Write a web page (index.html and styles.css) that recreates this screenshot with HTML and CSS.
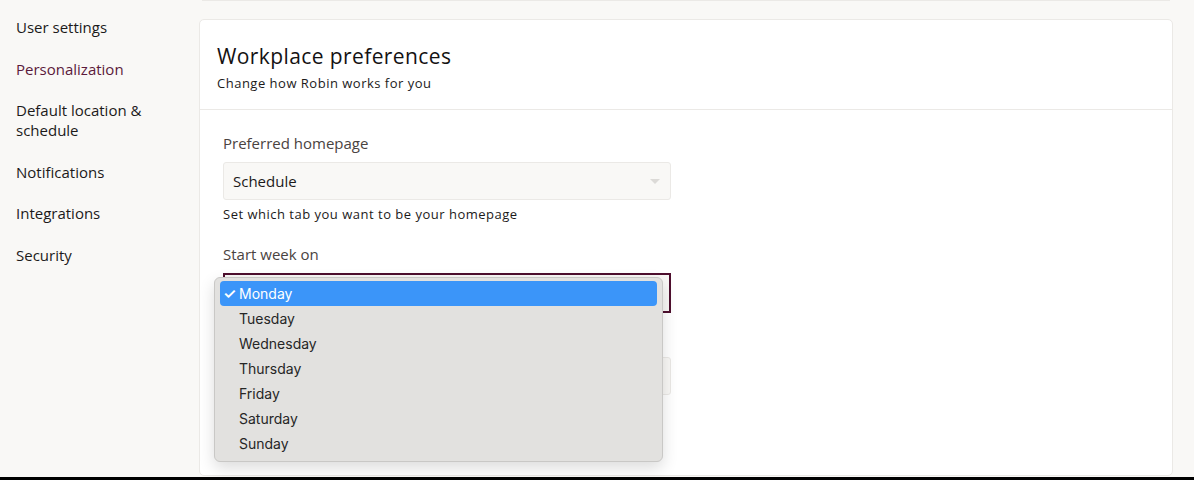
FILE: index.html
```html
<!DOCTYPE html>
<html lang="en">
<head>
    <meta charset="UTF-8">
    <meta name="viewport" content="width=device-width, initial-scale=1.0">
    <title>Personalization</title>
    <link rel="stylesheet" href="styles.css">
</head>
<body>
    <div class="page">
        <!-- Menu lateral -->
        <nav class="sidebar">
            <a class="nav-item">User settings</a>
            <a class="nav-item active">Personalization</a>
            <a class="nav-item">Default location &amp;<br>schedule</a>
            <a class="nav-item">Notifications</a>
            <a class="nav-item">Integrations</a>
            <a class="nav-item">Security</a>
        </nav>

        <main class="main">
            <div class="prev-card"></div>

            <section class="card">
                <header class="card-header">
                    <h1 class="card-title">Workplace preferences</h1>
                    <p class="card-subtitle">Change how Robin works for you</p>
                </header>

                <div class="card-body">
                    <div class="field">
                        <label class="field-label">Preferred homepage</label>
                        <div class="select">
                            <span>Schedule</span>
                            <span class="caret"></span>
                        </div>
                        <p class="field-help">Set which tab you want to be your homepage</p>
                    </div>

                    <div class="field">
                        <label class="field-label">Start week on</label>
                        <div class="select-wrap">
                            <div class="select focused"></div>

                            <!-- Menu nativo abierto -->
                            <ul class="menu">
                                <li class="menu-item selected"><span class="check">✓</span>Monday</li>
                                <li class="menu-item">Tuesday</li>
                                <li class="menu-item">Wednesday</li>
                                <li class="menu-item">Thursday</li>
                                <li class="menu-item">Friday</li>
                                <li class="menu-item">Saturday</li>
                                <li class="menu-item">Sunday</li>
                            </ul>
                        </div>
                    </div>

                    <div class="field field-hidden">
                        <div class="select"></div>
                    </div>
                </div>
            </section>
        </main>
    </div>
    <div class="bottom-bar"></div>
</body>
</html>
```

FILE: styles.css
```css
body {
    margin: 0;
    height: 480px;
    overflow: hidden;
    background: #f9f8f6;
    color: #1c1a1a;
    font-family: 'Open Sans', 'Lato', sans-serif;
    position: relative;
}

.page {
    display: flex;
}

/* Menu lateral */
.sidebar {
    width: 183px;
    flex-shrink: 0;
    padding: 17px 0 0 16px;
    display: flex;
    flex-direction: column;
    gap: 21.6px;
}

.nav-item {
    font-size: 15px;
    line-height: 20px;
    font-weight: 500;
    color: #1c1a1a;
    cursor: pointer;
}

.nav-item.active {
    color: #5b1a3b;
    font-weight: 400;
}

/* Contenido */
.main {
    flex: 1;
    padding-right: 21px;
}

.prev-card {
    height: 1px;
    margin: 0 3px;
    background: #ebe9e6;
}

.card {
    margin-top: 18px;
    height: 457px;
    background: #fff;
    border: 1px solid #ebe9e6;
    border-radius: 5px;
    box-sizing: border-box;
}

.card-header {
    padding: 22px 17px 17px;
    border-bottom: 1px solid #ebe9e6;
}

.card-title {
    margin: 0;
    font-size: 21px;
    line-height: 28px;
    font-weight: 400;
    letter-spacing: 0.4px;
    color: #141212;
}

.card-subtitle {
    margin: 4px 0 0;
    font-size: 13px;
    line-height: 18px;
    letter-spacing: 0.5px;
    color: #1c1a1a;
}

.card-body {
    padding: 23px 23px 0;
}

.field {
    width: 448px;
    margin-bottom: 21px;
}

.field-label {
    display: block;
    font-size: 15px;
    line-height: 20px;
    font-weight: 500;
    color: #4a4341;
    margin-bottom: 9px;
}

.select {
    height: 38px;
    box-sizing: border-box;
    background: #f9f8f6;
    border: 1px solid #ebe9e6;
    border-radius: 3px;
    padding: 0 9px;
    display: flex;
    align-items: center;
    justify-content: space-between;
    font-size: 15px;
    color: #1c1a1a;
}

.select.focused {
    height: 40px;
    border: 2px solid #4e0f2e;
    border-radius: 0;
}

.caret {
    width: 0;
    height: 0;
    border-left: 5px solid transparent;
    border-right: 5px solid transparent;
    border-top: 5px solid #dcdad7;
    margin-right: 1px;
}

.field-help {
    margin: 5px 0 0;
    font-size: 13px;
    line-height: 18px;
    letter-spacing: 0.5px;
    color: #1c1a1a;
}

.field-hidden {
    margin-top: 44px;
}

/* Menu desplegable */
.select-wrap {
    position: relative;
}

.menu {
    position: absolute;
    top: 4px;
    left: -9px;
    width: 449px;
    margin: 0;
    padding: 3px 5px 5px;
    box-sizing: border-box;
    list-style: none;
    background: #e2e1df;
    border: 1px solid #c9c8c6;
    border-radius: 6px;
    box-shadow: 0 6px 16px rgba(0, 0, 0, 0.14);
    font-family: 'Inter', 'Roboto', sans-serif;
    font-size: 14px;
    z-index: 10;
}

.menu-item {
    position: relative;
    height: 25px;
    line-height: 25px;
    padding-left: 19px;
    border-radius: 4px;
    color: #262626;
}

.menu-item.selected {
    background: #3b95f9;
    color: #fff;
}

.check {
    position: absolute;
    left: 3px;
    top: 0;
    font-size: 15px;
    font-weight: 600;
}

.bottom-bar {
    position: absolute;
    left: 0;
    right: 0;
    bottom: 0;
    height: 3px;
    background: #000;
}
```
